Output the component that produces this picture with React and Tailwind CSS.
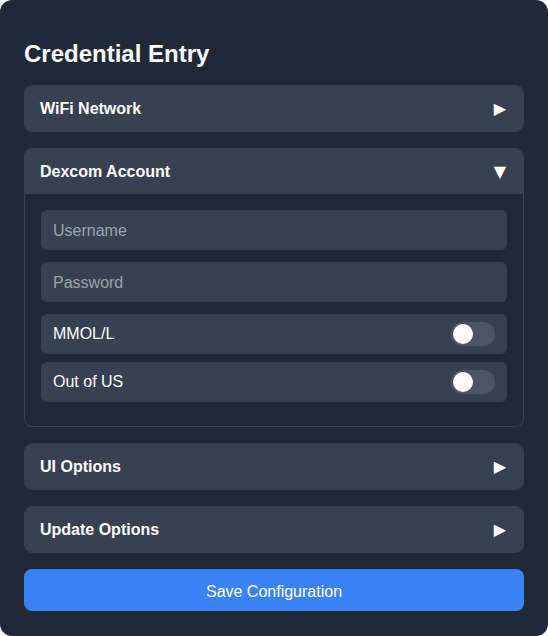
import React, { useState } from 'react';

const font = { fontFamily: '"Liberation Sans", Arial, sans-serif' };

function Toggle({ on, onChange }) {
  return (
    <button
      type="button"
      onClick={() => onChange(!on)}
      className={`relative h-6 w-11 rounded-full ${on ? 'bg-[#3b82f6]' : 'bg-[#4b5563]'}`}
    >
      <span
        className={`absolute top-[2px] h-5 w-5 rounded-full bg-white ${on ? 'left-[22px]' : 'left-[2px]'}`}
      />
    </button>
  );
}

function Section({ title, open, onToggle, children }) {
  return (
    <section className="mb-4 overflow-hidden rounded-lg border border-[#374151]">
      <div
        onClick={onToggle}
        className="flex h-[45px] cursor-pointer items-center justify-between bg-[#374151] pl-[15px] pr-[17px]"
      >
        <span className="text-base font-bold text-white">{title}</span>
        <span className="text-base leading-none text-white" style={{ fontFamily: '"DejaVu Sans", sans-serif' }}>
          {open ? '▼' : '▶'}
        </span>
      </div>
      {open && <div className="p-4">{children}</div>}
    </section>
  );
}

export default function App() {
  const [openSection, setOpenSection] = useState('dexcom');
  const [mmol, setMmol] = useState(false);
  const [outUs, setOutUs] = useState(false);

  const toggle = (key) => setOpenSection(openSection === key ? null : key);

  const inputClass =
    'mb-3 block h-10 w-full rounded-md bg-[#374151] px-3 pt-px text-base text-white placeholder-[#9ca3af] outline-none';

  return (
    <div className="h-[636px] w-[548px] bg-white" style={font}>
      <div className="h-full rounded-xl bg-[#1f2937] px-6 pt-[38px]">
        <h2 className="mb-[15px] text-2xl font-bold leading-8 text-white">Credential Entry</h2>

        <Section title="WiFi Network" open={openSection === 'wifi'} onToggle={() => toggle('wifi')}>
          <input placeholder="SSID" className={inputClass} />
        </Section>

        <Section title="Dexcom Account" open={openSection === 'dexcom'} onToggle={() => toggle('dexcom')}>
          <input placeholder="Username" className={inputClass} />
          <input type="password" placeholder="Password" className={inputClass} />
          <div className="mb-2 flex h-10 items-center justify-between rounded-md bg-[#374151] px-3">
            <span className="text-base text-white">MMOL/L</span>
            <Toggle on={mmol} onChange={setMmol} />
          </div>
          <div className="mb-2 flex h-10 items-center justify-between rounded-md bg-[#374151] px-3">
            <span className="text-base text-white">Out of US</span>
            <Toggle on={outUs} onChange={setOutUs} />
          </div>
        </Section>

        <Section title="UI Options" open={openSection === 'ui'} onToggle={() => toggle('ui')} />
        <Section title="Update Options" open={openSection === 'update'} onToggle={() => toggle('update')} />

        <button type="button" className="h-[42px] w-full rounded-lg bg-[#3b82f6] pt-[3px] text-base text-white">
          Save Configuration
        </button>
      </div>
    </div>
  );
}
